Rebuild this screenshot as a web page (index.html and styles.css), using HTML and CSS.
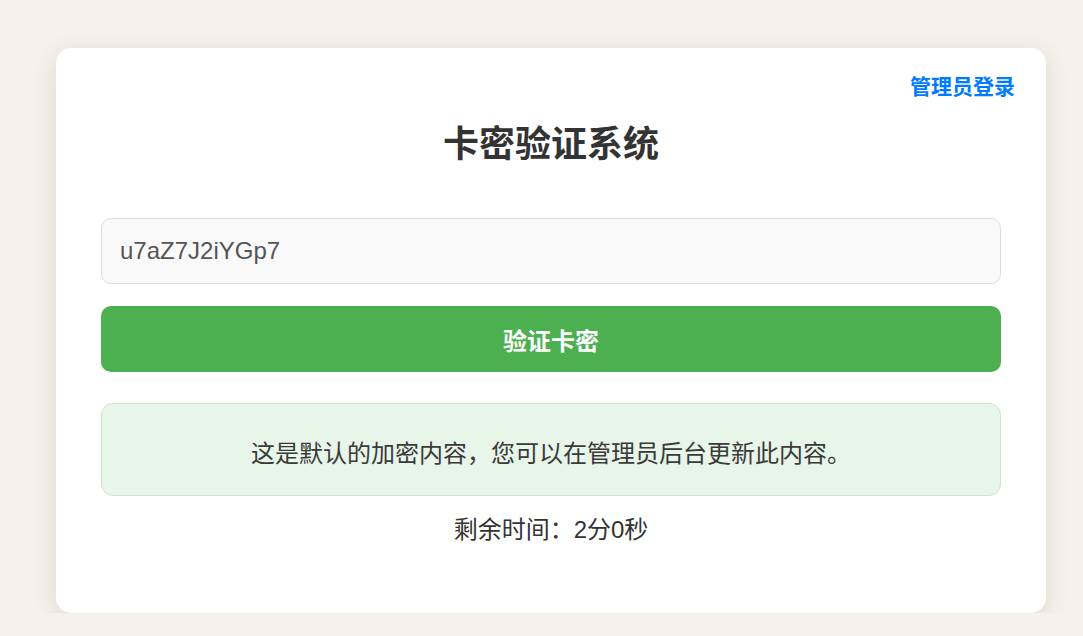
FILE: index.html
```html
<!DOCTYPE html>
<html lang="zh-CN">
<head>
<meta charset="utf-8">
<title>卡密验证系统</title>
<link rel="stylesheet" href="styles.css">
</head>
<body>
<div class="card">
  <a class="admin-link" href="#">管理员登录</a>
  <h1 class="title">卡密验证系统</h1>
  <input class="code-input" type="text" value="u7aZ7J2iYGp7">
  <button class="verify-btn" type="button">验证卡密</button>
  <div class="message">这是默认的加密内容，您可以在管理员后台更新此内容。</div>
  <div class="timer">剩余时间：2分0秒</div>
</div>
</body>
</html>
```
FILE: styles.css
```css
html, body {
  margin: 0;
  padding: 0;
}
body {
  background: #f6f1eb;
  font-family: "Liberation Sans", "Noto Sans CJK SC", Arial, sans-serif;
  color: #333;
}
.card {
  position: relative;
  box-sizing: border-box;
  width: 990px;
  margin: 48px 0 0 56px;
  padding: 45px;
  background: #fff;
  border-radius: 15px;
  box-shadow: 0 6px 24px rgba(90, 70, 40, 0.14);
  display: flex;
  flex-direction: column;
}
.admin-link {
  position: absolute;
  top: 27px;
  right: 31px;
  font-size: 21px;
  font-weight: bold;
  color: #007bff;
  text-decoration: none;
  line-height: 24px;
}
.title {
  margin: 26px 0 47px;
  font-size: 36px;
  line-height: 52px;
  font-weight: bold;
  text-align: center;
  color: #333;
}
.code-input {
  box-sizing: border-box;
  width: 100%;
  height: 66px;
  margin: 0;
  padding: 0 18px;
  border: 1px solid #ddd;
  border-radius: 10px;
  background: #f9f9f9;
  font-family: "Liberation Sans", "Noto Sans CJK SC", Arial, sans-serif;
  font-size: 24px;
  color: #555;
  outline: none;
}
.verify-btn {
  box-sizing: border-box;
  width: 100%;
  height: 66px;
  margin: 22px 0 0;
  border: none;
  border-radius: 10px;
  background: #4caf50;
  color: #fff;
  font-family: "Liberation Sans", "Noto Sans CJK SC", Arial, sans-serif;
  font-size: 24px;
  font-weight: bold;
}
.message {
  box-sizing: border-box;
  height: 93px;
  margin-top: 31px;
  padding-top: 4px;
  border: 1px solid #c8e6c9;
  border-radius: 12px;
  background: #e8f5e9;
  display: flex;
  align-items: center;
  justify-content: center;
  font-size: 24px;
  color: #3a3a3a;
}
.timer {
  margin: 16px 0 20px;
  font-size: 24px;
  line-height: 36px;
  text-align: center;
  color: #333;
}
```
